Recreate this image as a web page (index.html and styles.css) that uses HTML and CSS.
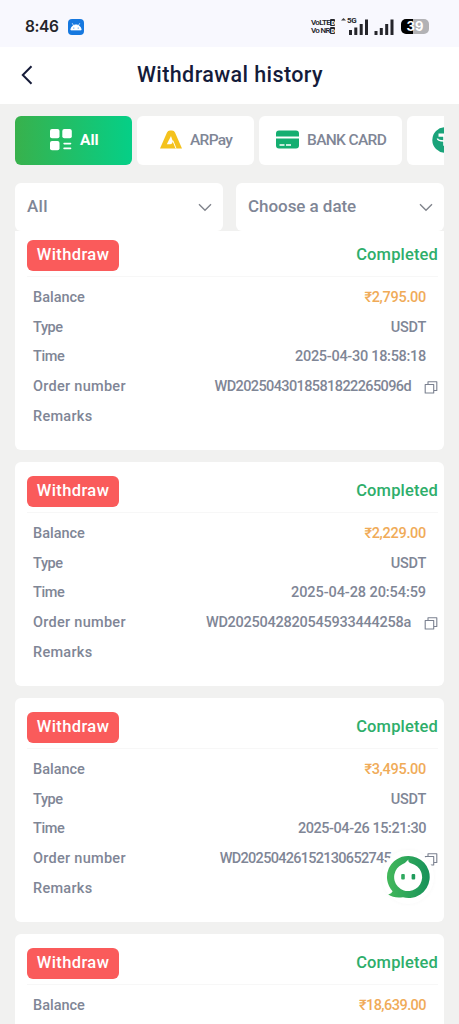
FILE: index.html
```html
<!DOCTYPE html>
<html lang="en">
<head>
<meta charset="utf-8">
<title>Withdrawal history</title>
<link rel="stylesheet" href="styles.css">
</head>
<body>
<svg class="defs" width="0" height="0" aria-hidden="true">
  <symbol id="copy" viewBox="0 0 14 14"><path d="M1.200 4.500h8.500v8.500H1.200zM4 4.500V1.700h8.800v8.800H9.700" fill="none" stroke="#7b8190" stroke-width="1.100" stroke-linejoin="round"/></symbol>
  <symbol id="chevron" viewBox="0 0 14 9"><path d="M1 1.200l6 6 6-6" fill="none" stroke="#80848c" stroke-width="1.400"/></symbol>
</svg>
<div class="screen">
  <div class="status">
    <span class="clock">8:46</span>
    <svg class="app" viewBox="0 0 16 16"><rect width="16" height="16" rx="4" fill="#1678df"/><path d="M2.800 11a5.200 5.200 0 0 1 10.400 0zM4.200 4.200l1.500 2.500M11.800 4.200l-1.500 2.500" fill="#fff" stroke="#fff" stroke-width=".7"/><circle cx="5.800" cy="9" r=".6" fill="#1678df"/><circle cx="10.200" cy="9" r=".6" fill="#1678df"/></svg>
    <span class="volte"><span>VoLTE<b>D</b></span><span>Vo NR<b>D</b></span></span>
    <svg class="wave" width="5" height="5" viewBox="0 0 5 5"><path d="M0 2.500L2.500 0 5 2.500z" fill="#444"/></svg>
    <span class="net">5G</span>
    <svg class="signals" viewBox="0 0 46 17"><path d="M0 12h3v5H0zM5.300 9.500h3V17h-3zM10.700 6h3v11h-3zM16 1.500h3V17h-3zM25.500 13h3v4h-3zM30.800 10h3v7h-3zM36.200 6h3v11h-3zM41.500 1.500h3V17h-3z" fill="#25252a"/></svg>
    <span class="battery">39</span>
  </div>
  <header class="header">
    <svg class="back" viewBox="0 0 12 20"><path d="M10.500 1.300L1.800 10l8.700 8.700" fill="none" stroke="#151b38" stroke-width="2"/></svg>
    <h1>Withdrawal history</h1>
  </header>
  <nav class="tabs">
    <div class="tab tab-all"><svg width="22" height="22" viewBox="0 0 22 22"><g fill="#fff"><rect width="9.500" height="9.300" rx="2"/><rect x="12.300" width="9.500" height="9.300" rx="2"/><rect y="12" width="9.500" height="9.300" rx="2"/><rect x="13.300" y="13.700" width="8" height="1.700" rx=".8"/><rect x="13.300" y="18.500" width="8" height="1.700" rx=".8"/></g></svg><span>All</span></div>
    <div class="tab tab-ar"><svg width="22" height="19" viewBox="0 0 22 19"><path d="M0 18.500L7 2.500Q7.800.5 10 .5h2q2.200 0 3 2l7 16z" fill="#f4c21d"/><path d="M11 6L6.800 14.300h3.400q2.200 0 2.600-3z" fill="#fff"/><path d="M12.800 10.500l3.200 8" stroke="#fff" stroke-width="1"/></svg><span>ARPay</span></div>
    <div class="tab tab-bank"><svg width="23" height="19" viewBox="0 0 23 19"><path d="M0 6.500V3.500Q0 .5 3 .5h17q3 0 3 3v3zM0 8.500h23V15.500q0 3-3 3H3q-3 0-3-3z" fill="#14ae70"/><path d="M3.500 15h5M10 15h5" stroke="#fff" stroke-width="1.500"/></svg><span>BANK CARD</span></div>
    <div class="tab tab-usdt"><svg width="26" height="26" viewBox="0 0 26 26"><circle cx="13" cy="13" r="12.700" fill="#1aa37a"/><path d="M6.500 6.500h13v3.200h-4.700v9h-3.600v-9H6.500z" fill="#fff"/><path d="M5.500 11.500q0 2.500 7.500 2.500t7.500-2.500" fill="none" stroke="#fff" stroke-width="1.500"/></svg></div>
  </nav>
  <div class="filters">
    <div class="filter"><span>All</span><svg width="14" height="9"><use href="#chevron"/></svg></div>
    <div class="filter"><span class="f-date">Choose a date</span><svg width="14" height="9"><use href="#chevron"/></svg></div>
  </div>
  <main class="list">
    <article class="card first">
      <div class="card-head"><span class="badge">Withdraw</span><span class="state">Completed</span></div>
      <div class="row"><span>Balance</span><span class="amount">₹2,795.00</span></div>
      <div class="row"><span class="short">Type</span><span class="usdt">USDT</span></div>
      <div class="row"><span class="short">Time</span><span class="time">2025-04-30 18:58:18</span></div>
      <div class="row order"><span class="wide">Order number</span><span class="number">WD2025043018581822265096d</span><svg width="14" height="14"><use href="#copy"/></svg></div>
      <div class="row"><span class="wide">Remarks</span></div>
    </article>
    <article class="card second">
      <div class="card-head"><span class="badge">Withdraw</span><span class="state">Completed</span></div>
      <div class="row"><span>Balance</span><span class="amount">₹2,229.00</span></div>
      <div class="row"><span class="short">Type</span><span class="usdt">USDT</span></div>
      <div class="row"><span class="short">Time</span><span class="time">2025-04-28 20:54:59</span></div>
      <div class="row order"><span class="wide">Order number</span><span class="number">WD2025042820545933444258a</span><svg width="14" height="14"><use href="#copy"/></svg></div>
      <div class="row"><span class="wide">Remarks</span></div>
    </article>
    <article class="card third">
      <div class="card-head"><span class="badge">Withdraw</span><span class="state">Completed</span></div>
      <div class="row"><span>Balance</span><span class="amount">₹3,495.00</span></div>
      <div class="row"><span class="short">Type</span><span class="usdt">USDT</span></div>
      <div class="row"><span class="short">Time</span><span class="time">2025-04-26 15:21:30</span></div>
      <div class="row order"><span class="wide">Order number</span><span class="number">WD20250426152130652745</span><svg width="14" height="14"><use href="#copy"/></svg></div>
      <div class="row"><span class="wide">Remarks</span></div>
    </article>
    <article class="card fourth">
      <div class="card-head"><span class="badge">Withdraw</span><span class="state">Completed</span></div>
      <div class="row"><span>Balance</span><span class="amount">₹18,639.00</span></div>
    </article>
  </main>
  <div class="support">
    <svg width="44" height="44" viewBox="0 0 44 44"><defs><linearGradient id="ring"><stop offset="0" stop-color="#43b85a"/><stop offset="1" stop-color="#16925a"/></linearGradient></defs><path d="M22 1a21 21 0 1 1-5 41.200Q8 43.500 2.200 39.500q3.600-1 4.400-3.200A21 21 0 0 1 22 1z" fill="url(#ring)"/><path d="M22.500 4.500q-1 3 3 4A14 14 0 1 1 16 9.500q3-1 6.500-5z" fill="#fff"/><rect x="15.200" y="19" width="3.600" height="5.500" rx="1" fill="#30aa60"/><rect x="25.600" y="19" width="3.600" height="5.500" rx="1" fill="#209b5c"/></svg>
  </div>
</div>
</body>
</html>
```

FILE: styles.css
```css
* { box-sizing: border-box; }
body { margin: 0; font-family: Roboto, "Noto Sans", sans-serif; font-weight: 500; color: #7f8696; }
svg { display: block; flex: none; }
.defs { position: absolute; }
.screen { position: relative; display: flex; flex-direction: column; width: 459px; height: 1024px; overflow: hidden; background: #f1f1f0; }
.status { display: flex; align-items: center; height: 47px; flex: none; padding: 6px 0 0 25px; background: #f8f8fe; color: #25252a; }
.clock { width: 43px; flex: none; font-family: Inter, Roboto, sans-serif; font-size: 15.500px; font-weight: 600; letter-spacing: -.4px; }
.app { width: 16px; height: 16px; }
.volte { display: flex; flex-direction: column; flex: none; width: 25px; margin-left: 227px; font-size: 8px; line-height: 7.500px; font-weight: 600; letter-spacing: -.65px; white-space: nowrap; }
.volte b { padding: 0 1px; border-radius: 1px; background: #25252a; color: #fff; font-size: 6px; }
.wave { margin: -12px 1px 0 5px; }
.net { width: 10px; flex: none; margin: -11px -8px 0 0; font-size: 8px; line-height: 8px; font-weight: 700; letter-spacing: -.3px; }
.signals { width: 46px; height: 17px; margin-right: 6px; }
.battery { width: 28px; height: 15px; flex: none; border-radius: 5px; background: linear-gradient(90deg, #000 42%, #b2b2b5 42%); color: #fff; font: 700 13px/15px Inter, sans-serif; text-align: center; }
.header { display: flex; align-items: center; flex: none; height: 57px; padding-left: 21px; background: #fff; color: #141b3a; }
.back { width: 12px; height: 20px; margin-top: -2px; }
h1 { margin: -2px 0 0 104px; font-size: 21.500px; font-weight: 500; line-height: 28px; letter-spacing: .4px; white-space: nowrap; }
.tabs { display: flex; gap: 5px; flex: none; height: 49px; margin: 12px 15px 0; overflow: hidden; font-size: 15.500px; }
.tab { display: flex; align-items: center; flex: none; border-radius: 6px; background: #fff; white-space: nowrap; padding-bottom: 2px; }
.tab-all { width: 117px; padding-left: 35px; gap: 8px; background: linear-gradient(90deg, #38b14c, #05cf87); color: #fff; font-weight: 700; }
.tab-ar { width: 117px; padding-left: 23px; gap: 8px; letter-spacing: -.7px; }
.tab-bank { width: 143px; padding-left: 17px; gap: 8px; letter-spacing: -.65px; }
.tab-usdt { width: 110px; padding-left: 25px; }
.filters { display: flex; gap: 13px; flex: none; height: 48px; margin: 18px 15px 0; }
.filter { display: flex; align-items: center; justify-content: space-between; flex: 1; padding: 0 11px 0 12px; border-radius: 6px; background: #fff; font-size: 17px; }
.filter span { margin-top: -3px; letter-spacing: .3px; }
.filter .f-date { letter-spacing: -.05px; }
.list { flex: 1; min-height: 0; overflow: hidden; padding: 0 15px; }
.card { height: 224px; margin-bottom: 12px; padding: 14px 6px 0 12px; border-radius: 6px; background: #fff; }
.card:first-child { margin-top: -5px; border-radius: 0 0 6px 6px; }
.card-head { display: flex; align-items: center; justify-content: space-between; height: 37px; padding-bottom: 6px; border-bottom: 1px solid #f7f7f7; margin-bottom: 6px; }
.badge { width: 92px; height: 31px; border-radius: 6px; background: #fa5b5b; color: #fff; text-align: center; font-size: 16.500px; line-height: 30px; letter-spacing: .4px; }
.state { font-size: 16.500px; color: #2eae6b; letter-spacing: .15px; margin-top: -1px; }
.row { display: flex; align-items: center; justify-content: space-between; height: 29.600px; padding: 0 12px 0 6px; font-size: 14.500px; white-space: nowrap; }
.short { letter-spacing: -.4px; }
.wide { letter-spacing: .28px; }
.usdt { letter-spacing: -.25px; }
.order { padding-right: 0; }
.number { margin-left: auto; margin-right: 13px; }
.amount { color: #f0ab58; letter-spacing: -.3px; }
.first .time { letter-spacing: -.29px; }
.first .number { letter-spacing: -.61px; }
.second .time { letter-spacing: -.08px; }
.second .number { letter-spacing: -.25px; }
.third .time { letter-spacing: -.44px; }
.third .number { letter-spacing: -.72px; margin-right: 33px; }
.fourth .amount { letter-spacing: -.55px; }
.support { position: absolute; left: 382px; top: 850px; display: flex; align-items: center; justify-content: center; width: 52px; height: 54px; border-radius: 50%; background: #fff; box-shadow: 0 0 4px #00000008; }
```
